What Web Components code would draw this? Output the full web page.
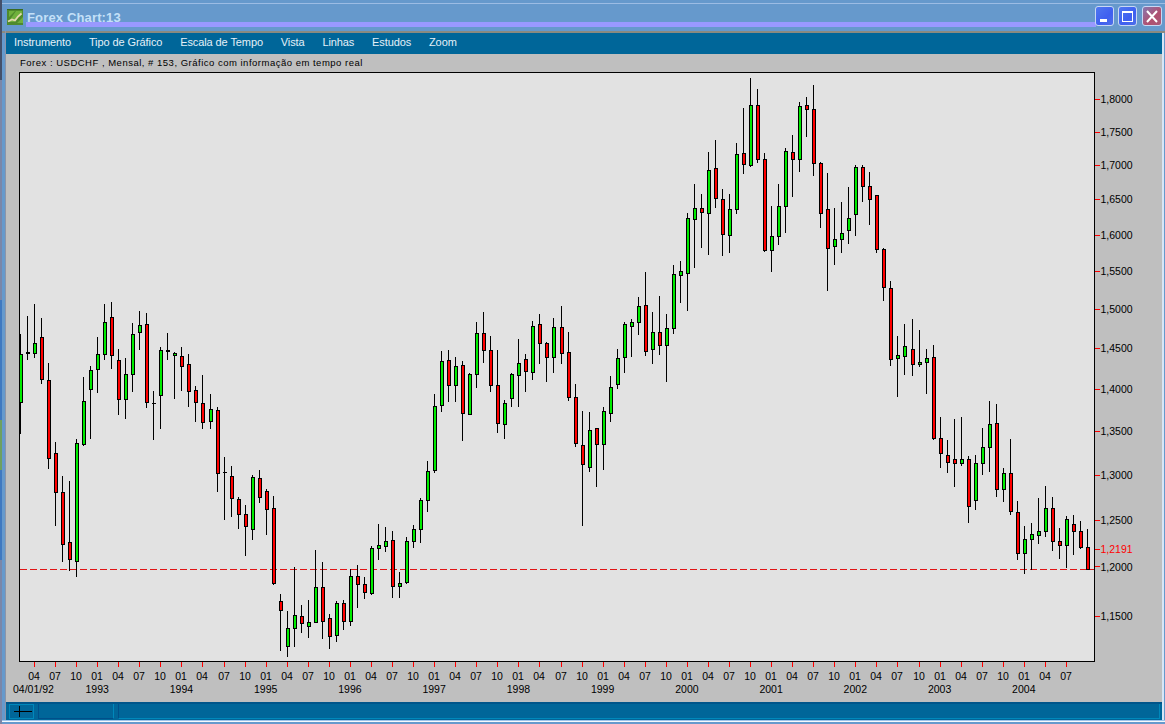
<!DOCTYPE html>
<html lang="pt"><head><meta charset="utf-8"><title>Forex Chart:13</title>
<style>html,body{margin:0;padding:0;overflow:hidden;width:1165px;height:724px;background:#6699cc;font-family:"Liberation Sans",Arial,sans-serif}</style>
</head><body>
<fx-window>
  <fx-titlebar slot="title">
    Forex Chart:13
    <fx-winbutton slot="controls" kind="min"></fx-winbutton>
    <fx-winbutton slot="controls" kind="max"></fx-winbutton>
    <fx-winbutton slot="controls" kind="close"></fx-winbutton>
  </fx-titlebar>
  <fx-menubar slot="menu">
    <fx-menuitem>Instrumento</fx-menuitem><fx-menuitem>Tipo de Gráfico</fx-menuitem><fx-menuitem>Escala de Tempo</fx-menuitem><fx-menuitem>Vista</fx-menuitem><fx-menuitem>Linhas</fx-menuitem><fx-menuitem>Estudos</fx-menuitem><fx-menuitem>Zoom</fx-menuitem>
  </fx-menubar>
  <fx-chart slot="body" caption="Forex : USDCHF , Mensal, # 153, Gráfico com informação em tempo real"></fx-chart>
  <fx-statusbar slot="status"></fx-statusbar>
</fx-window>
<script>
const tpl=(html)=>{const t=document.createElement('template');t.innerHTML=html;return t;};
class Base extends HTMLElement{
  constructor(){super();this.attachShadow({mode:'open'}).appendChild(this.constructor.template.content.cloneNode(true));}
}
class FxWindow extends Base{
  static template=tpl(`<style>
    :host{display:flex;flex-direction:column;width:1165px;height:724px;box-sizing:border-box;background:#6699cc;position:relative;
      background-image:linear-gradient(#55607a,#55607a);
      background-size:100% 1px;background-position:0 0;background-repeat:no-repeat;background-color:#6699cc}
    .inner{display:flex;flex-direction:column;flex:1;margin:0 1px 0 6px;border-right:2px solid #d8e6f6;min-height:0}
    .strip{position:absolute;left:0;top:0;bottom:0;width:2px;background:linear-gradient(#44506a 0 80px,#7a86a8 80px 300px,#3f78c0 300px 420px,#6fa060 420px 470px,#3f78c0 470px 560px,#7a86a8 560px)}
    .rail{position:absolute;left:5px;top:31px;bottom:4px;width:1px;background:#8c94a8}
    .bottom{height:4px;flex:none;background:linear-gradient(#9cc4ec 0 1px,#f4f8fc 1px 2px,#6699cc 2px)}
  </style><span class="strip"></span><span class="rail"></span><slot name="title"></slot>
  <div class="inner"><slot name="menu"></slot><slot name="body"></slot><slot name="status"></slot></div><div class="bottom"></div>`);
}
class FxTitlebar extends Base{
  static template=tpl(`<style>
    :host{display:flex;align-items:center;height:33px;flex:none;box-sizing:border-box;padding:3px 3px 4px 7px;gap:4px;
      color:#c4e0f8;font:bold 13px "Liberation Sans",Arial,sans-serif;letter-spacing:.15px;
      background:linear-gradient(#9cbce4,#9cbce4) 0 3px/100% 1px no-repeat,
        linear-gradient(#9999ff,#9999ff) 26px 22px/1070px 5px no-repeat,
        linear-gradient(#6699cc,#6699cc) 0 0/100% 31px no-repeat,
        linear-gradient(#8a8a80,#8a8a80) 0 31px/100% 2px no-repeat}
    svg{width:16px;height:16px;flex:none;margin-top:1px}
    .t{flex:1;white-space:nowrap;padding-top:2px}
    .c{display:flex;gap:4px;align-items:center;margin-top:-1px}
  </style>
  <svg viewBox="0 0 16 16"><rect width="16" height="16" fill="#4f8a2c"/><rect x="0" y="0" width="16" height="1" fill="#3a6a20"/><path d="M2 2h6l-6 6zM10 14l6-6v6zM9 2h6v3l-8 8H2v-1z" fill="#6fb03c"/><path d="M1 12.500L5 10.500L8 11.500L11 7.500L14.500 4.500" fill="none" stroke="#e4d8b0" stroke-width="1.800"/></svg>
  <span class="t"><slot></slot></span><span class="c"><slot name="controls"></slot></span>`);
}
class FxWinButton extends Base{
  static template=tpl(`<style>
    :host{display:block;width:19px;height:20px;box-sizing:border-box;border:1px solid #c8d8f4;border-radius:3px;background:linear-gradient(135deg,#5078f0,#3f5ff0 60%,#4f70e8);flex:none}
    :host([kind=close]){background:linear-gradient(135deg,#8878b0,#b05070 60%,#a85878);margin-left:1px;width:20px}
    svg{display:block;width:100%;height:100%}
  </style><svg viewBox="0 0 17 18"></svg>`);
  connectedCallback(){
    const k=this.getAttribute('kind'),s=this.shadowRoot.querySelector('svg');
    s.innerHTML=k==='min'?'<rect x="4" y="12" width="7" height="3" fill="#fff"/>'
      :k==='max'?'<rect x="3.500" y="4.500" width="10" height="10" fill="none" stroke="#fff"/><rect x="3" y="4" width="11" height="2" fill="#fff"/>'
      :'<path d="M3.500 4L13.500 15M13.500 4L3.500 15" stroke="#fff" stroke-width="2"/>';
  }
}
class FxMenubar extends Base{
  static template=tpl(`<style>:host{display:flex;height:21px;flex:none;box-sizing:border-box;align-items:center;gap:17.8px;padding:0 0 3px 8px;background:#006699}</style><slot></slot>`);
}
class FxMenuItem extends Base{
  static template=tpl(`<style>:host{display:block;color:#e4f0f8;font:11px "Liberation Sans",Arial,sans-serif;letter-spacing:-.09px;white-space:nowrap}</style><slot></slot>`);
}
const DATA=[
[1,334,354,402,434,'g'],[2,316,352,354,360,'d'],[3,304,343,353,358,'g'],[4,318,337,379,384,'r'],[5,363,380,458,469,'r'],
[6,442,453,492,526,'r'],[7,476,492,544,562,'r'],[8,481,542,559,571,'r'],[9,439,443,561,577,'g'],[10,377,401,444,446,'g'],
[11,366,370,389,439,'g'],[12,337,354,369,393,'g'],[13,304,322,354,360,'g'],[14,302,317,355,369,'r'],[15,349,360,399,415,'r'],
[16,358,374,399,419,'g'],[17,323,334,374,392,'g'],[18,311,325,332,350,'g'],[19,313,324,402,408,'r'],[20,391,403,404,440,'d'],
[21,347,350,395,429,'g'],[22,333,350,352,360,'d'],[23,352,353,355,399,'g'],[24,347,356,366,391,'r'],[25,354,364,391,407,'r'],
[26,386,390,402,422,'r'],[27,375,403,422,429,'r'],[28,394,409,421,429,'g'],[29,407,410,473,492,'r'],[30,457,472,473,520,'d'],
[31,466,476,498,517,'r'],[32,497,499,514,529,'r'],[33,505,514,526,556,'r'],[34,475,477,529,540,'g'],[35,470,478,497,503,'r'],
[36,489,491,509,535,'r'],[37,496,508,583,585,'r'],[38,594,601,610,651,'r'],[39,611,628,646,657,'g'],[40,567,615,628,647,'g'],
[41,605,616,623,633,'r'],[42,600,622,626,638,'g'],[43,550,587,622,623,'g'],[44,562,587,621,639,'r'],[45,614,618,636,649,'r'],
[46,601,603,635,642,'g'],[47,600,603,621,630,'r'],[48,569,576,621,626,'g'],[49,565,576,584,608,'r'],[50,577,584,592,599,'r'],
[51,546,548,593,595,'g'],[52,524,545,548,560,'g'],[53,527,541,546,552,'g'],[54,531,540,586,598,'r'],[55,572,583,586,598,'g'],
[56,537,541,582,584,'g'],[57,525,529,541,548,'g'],[58,498,500,529,543,'g'],[59,461,471,500,512,'g'],[60,394,406,470,473,'g'],
[61,351,361,405,412,'g'],[62,350,360,385,402,'r'],[63,357,366,385,402,'g'],[64,361,365,413,441,'r'],[65,373,374,414,415,'g'],
[66,322,333,374,388,'g'],[67,312,333,350,363,'r'],[68,336,350,385,392,'r'],[69,350,385,423,433,'r'],[70,400,403,424,439,'g'],
[71,373,374,398,407,'g'],[72,339,363,375,407,'g'],[73,354,359,371,392,'r'],[74,321,326,372,380,'g'],[75,314,324,343,364,'r'],
[76,342,343,357,382,'r'],[77,318,327,357,373,'g'],[78,306,327,353,364,'r'],[79,332,352,397,401,'r'],[80,384,397,443,447,'r'],
[81,411,445,464,526,'r'],[82,412,430,467,472,'g'],[83,428,428,444,487,'r'],[84,407,411,444,470,'g'],[85,376,387,413,422,'g'],
[86,349,358,384,389,'g'],[87,322,324,357,373,'g'],[88,319,322,326,357,'g'],[89,297,306,322,335,'g'],[90,272,305,351,356,'r'],
[91,312,332,349,364,'g'],[92,296,332,345,355,'r'],[93,314,328,345,382,'g'],[94,265,274,328,334,'g'],[95,261,271,275,303,'g'],
[96,213,218,273,311,'g'],[97,184,208,219,268,'g'],[98,194,208,212,248,'r'],[99,152,170,213,255,'g'],[100,140,168,198,208,'r'],
[101,189,199,234,256,'r'],[102,194,209,235,253,'g'],[103,143,154,209,214,'g'],[104,108,153,164,174,'r'],[105,78,105,165,167,'g'],
[106,89,105,159,163,'r'],[107,153,159,250,252,'r'],[108,206,236,250,272,'g'],[109,184,206,236,245,'g'],[110,148,151,206,233,'g'],
[111,135,152,159,197,'r'],[112,102,106,159,172,'g'],[113,97,105,109,137,'r'],[114,85,109,163,176,'r'],[115,162,163,213,228,'r'],
[116,173,209,248,291,'r'],[117,208,239,246,265,'g'],[118,202,233,239,253,'g'],[119,187,218,230,244,'g'],[120,165,167,214,236,'g'],
[121,165,167,186,202,'r'],[122,172,186,199,225,'r'],[123,195,195,249,253,'r'],[124,248,249,287,301,'r'],[125,281,288,359,366,'r'],
[126,336,355,358,397,'g'],[127,324,346,356,375,'g'],[128,319,349,364,376,'r'],[129,330,362,364,367,'g'],[130,349,358,362,394,'g'],
[131,345,357,438,440,'r'],[132,417,438,453,468,'r'],[133,440,455,462,473,'r'],[134,419,459,463,487,'r'],[135,417,459,463,466,'g'],
[136,456,459,506,523,'r'],[137,455,463,500,510,'g'],[138,428,447,463,475,'g'],[139,401,424,447,472,'g'],[140,404,423,489,497,'r'],
[141,468,473,489,502,'g'],[142,439,473,511,515,'r'],[143,501,512,553,560,'r'],[144,526,539,553,574,'g'],[145,523,534,539,570,'g'],
[146,498,531,535,544,'g'],[147,486,508,531,537,'g'],[148,497,508,541,551,'r'],[149,528,541,545,559,'r'],[150,516,519,545,568,'g'],
[151,515,524,531,555,'r'],[152,521,531,547,549,'r'],[153,529,547,569,569,'r']];
class FxChart extends Base{
  static template=tpl(`<style>
    :host{display:flex;flex-direction:column;flex:1;min-height:0;background:#bfbfbf;color:#000}
    .cap{height:16px;flex:none;box-sizing:border-box;padding:2px 0 0 14px;font:9.5px/13px "Liberation Sans",Arial,sans-serif;letter-spacing:.5px;white-space:nowrap;color:#000}
    svg{display:block;flex:1;width:100%;min-height:0;font:10.5px "Liberation Sans",Arial,sans-serif;shape-rendering:crispEdges}
    text{fill:#000}
    text.hot{fill:#f00}
  </style><div class="cap"></div><svg xmlns="http://www.w3.org/2000/svg" viewBox="6 70 1156 632" preserveAspectRatio="xMinYMin"></svg>`);
  connectedCallback(){
    this.shadowRoot.querySelector('.cap').textContent=this.getAttribute('caption');
    const R=(x,y,w,h,f)=>`<rect x="${x}" y="${y}" width="${w}" height="${h}" fill="${f}"/>`;
    const G='#00ec00',RD='#ff0000';
    let s='<defs><clipPath id="plot"><rect x="20" y="73" width="1074" height="588"/></clipPath></defs>';
    s+=R(19,72,1076,590,'#000')+R(20,73,1074,588,'#e2e2e2');
    let c='<path d="M20 569.500H1094" stroke="#e01414" stroke-dasharray="7 3" stroke-width="1"/>';
    for(const [i,wt,bt,bb,wb,k] of DATA){
      const X=Math.round(34+7.02*(i-3));
      c+=R(X,wt,1,wb-wt,'#000');
      if(k==='d'){c+=R(X-1,bt,4,bb-bt,'#000');continue;}
      c+=R(X-1,bt,4,bb-bt+1,'#000')+R(X,bt+1,2,Math.max(1,bb-bt-1),k==='g'?G:RD);
    }
    s+=`<g clip-path="url(#plot)">${c}</g>`;
    const ys=[[99,'1,8000'],[132,'1,7500'],[165,'1,7000'],[199,'1,6500'],[235,'1,6000'],[271,'1,5500'],[309,'1,5000'],[348,'1,4500'],[389,'1,4000'],[431,'1,3500'],[475,'1,3000'],[520,'1,2500'],[549,'1,2191',1],[566,'1,2000',0,1],[616,'1,1500']];
    for(const [y,t,h,o] of ys){
      s+=R(1095,y,5,1,RD);
      s+=`<text x="1100.500" y="${y+4+(o||0)}"${h?' class="hot"':''}>${t}</text>`;
    }
    const m=['04','07','10','01'];
    for(let n=0;n<50;n++){
      const X=Math.round(34+21.06*n);
      s+=R(X,662,1,5,RD);
      s+=`<text x="${X}" y="680" text-anchor="middle">${m[n%4]}</text>`;
    }
    s+='<text x="13" y="693">04/01/92</text>';
    for(let y=1993;y<=2004;y++){
      const X=34+21.06*(3+(y-1993)*4);
      s+=`<text x="${X.toFixed(1)}" y="693" text-anchor="middle">${y}</text>`;
    }
    this.shadowRoot.querySelector('svg').innerHTML=s;
  }
}
class FxStatusbar extends Base{
  static template=tpl(`<style>
    :host{display:flex;height:18px;flex:none;box-sizing:border-box;gap:4px;padding:0 2px 1px 3px;background:#006699;border-top:2px solid #00558a}
    .cell{box-sizing:border-box;height:15px;border-style:solid;border-width:1px}
    .a{width:25px;border-color:#0088bb;display:flex;align-items:center;justify-content:center}
    .b{width:76px;border-color:#004f8a #0088bb #004f8a #004f8a;border-width:0 1px 1px 1px}
    .c{flex:1;border-color:#004f8a #0088bb #0088bb #004f8a;border-width:0 1px 1px 1px}
    svg{width:23px;height:13px;display:block}
  </style><span class="cell a"><svg viewBox="0 0 23 13"><path d="M4 6.500H22M9.500 1V12" stroke="#000" fill="none"/></svg></span><span class="cell b"></span><span class="cell c"></span>`);
}
customElements.define('fx-window',FxWindow);
customElements.define('fx-titlebar',FxTitlebar);
customElements.define('fx-winbutton',FxWinButton);
customElements.define('fx-menubar',FxMenubar);
customElements.define('fx-menuitem',FxMenuItem);
customElements.define('fx-chart',FxChart);
customElements.define('fx-statusbar',FxStatusbar);
</script>
</body></html>
